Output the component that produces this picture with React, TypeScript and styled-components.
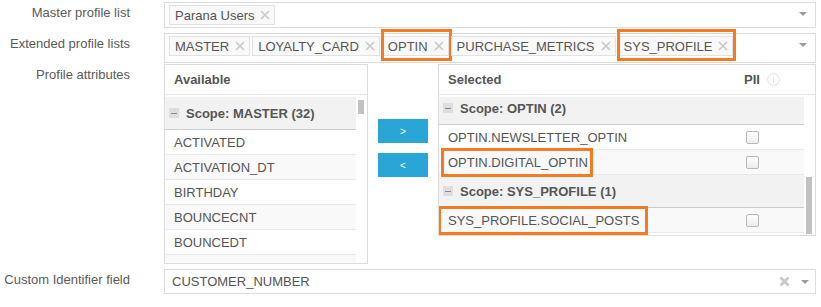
import * as React from 'react';
import styled, { createGlobalStyle, css } from 'styled-components';

const GlobalStyle = createGlobalStyle`
  html, body {
    margin: 0;
    padding: 0;
    background: #fff;
  }
  body {
    font-family: "Liberation Sans", Arial, sans-serif;
    font-size: 13px;
    color: #555;
  }
`;

const ORANGE = '#f47b20';

const Form = styled.div`
  width: 821px;
  box-sizing: border-box;
  padding: 2px 5px 0 0;
`;

const Row = styled.div<{ $gap: number }>`
  display: grid;
  grid-template-columns: 130px 1fr;
  column-gap: 34px;
  margin-bottom: ${(p) => p.$gap}px;
`;

const Label = styled.div`
  text-align: right;
  padding-top: 3px;
  line-height: 16px;
  color: #5a5a5a;
  white-space: nowrap;
`;

const Select = styled.div<{ $height: number }>`
  height: ${(p) => p.$height}px;
  box-sizing: border-box;
  border: 1px solid #dcdcdc;
  background: #fff;
  display: flex;
  align-items: flex-start;
  padding: 2px 8px 0 4px;
`;

const Tags = styled.div`
  display: flex;
  gap: 2px;
  flex: 1;
`;

const marked = css`
  &::after {
    content: '';
    position: absolute;
    top: -8px;
    bottom: -6px;
    left: -2px;
    right: -4px;
    border: 3px solid ${ORANGE};
    pointer-events: none;
  }
`;

const Tag = styled.span<{ $marked?: boolean }>`
  position: relative;
  display: inline-flex;
  align-items: center;
  height: 20px;
  box-sizing: border-box;
  padding: 0 4px 0 5px;
  border: 1px solid #e2e2e2;
  background: #f9f9f9;
  color: #555;
  white-space: nowrap;
  ${(p) => p.$marked && marked}
`;

const TagX = styled.svg`
  margin-left: 6px;
  flex: none;
`;

const Caret = styled.span<{ $top?: number }>`
  margin-left: auto;
  margin-top: ${(p) => p.$top ?? 7}px;
  width: 0;
  height: 0;
  border-left: 4px solid transparent;
  border-right: 4px solid transparent;
  border-top: 4px solid #9a9a9a;
  flex: none;
`;

const SingleSelect = styled(Select)`
  align-items: center;
  padding: 0 6px 0 7px;
`;

const SingleValue = styled.span`
  flex: 1;
  color: #555;
`;

const ClearX = styled.svg`
  margin-right: 11px;
`;

const Picker = styled.div`
  display: flex;
  align-items: flex-start;
`;

const Panel = styled.div<{ $width?: number; $height: number }>`
  box-sizing: border-box;
  ${(p) => (p.$width ? `width: ${p.$width}px;` : 'flex: 1;')}
  height: ${(p) => p.$height}px;
  border: 1px solid #dcdcdc;
  background: #fff;
  display: flex;
  flex-direction: column;
`;

const PanelHeader = styled.div`
  height: 29px;
  flex: none;
  border-bottom: 1px solid #e6e6e6;
  display: grid;
  grid-template-columns: 1fr 114px;
  align-items: center;
  padding-left: 9px;
  font-weight: bold;
  color: #555;
`;

const PiiHead = styled.div`
  display: flex;
  align-items: center;
  gap: 7px;
  padding-left: 43px;
`;

const PanelBody = styled.div`
  flex: 1;
  min-height: 0;
  display: flex;
  padding-top: 2px;
`;

const List = styled.div`
  flex: 1;
  overflow: hidden;
`;

const ListInner = styled.div<{ $scroll: number }>`
  margin-top: -${(p) => p.$scroll}px;
`;

const ScopeRow = styled.div`
  height: 32px;
  border-bottom: 1px solid #cbcbcb;
  background: #f2f2f2;
  display: flex;
  align-items: center;
  padding-left: 4px;
  font-weight: bold;
  color: #555;
`;

const Minus = styled.span`
  width: 10px;
  height: 10px;
  background: #dedede;
  margin-right: 7px;
  display: flex;
  align-items: center;
  justify-content: center;

  &::before {
    content: '';
    width: 6px;
    height: 1px;
    background: #8a8a8a;
  }
`;

const Item = styled.div<{ $shade?: boolean }>`
  height: 24px;
  border-bottom: 1px solid #e8e8e8;
  background: ${(p) => (p.$shade ? '#f9f9f9' : '#fff')};
  display: grid;
  grid-template-columns: 1fr 103px;
  align-items: center;
  padding-left: 9px;
  color: #555;
  white-space: nowrap;
`;

const ItemName = styled.span<{ $marked?: boolean; $left?: number; $right?: number }>`
  position: relative;
  justify-self: start;
  ${(p) =>
    p.$marked &&
    css`
      &::after {
        content: '';
        position: absolute;
        top: -7px;
        bottom: -7px;
        left: -${p.$left ?? 7}px;
        right: -${p.$right ?? 5}px;
        border: 3px solid ${ORANGE};
        pointer-events: none;
      }
    `}
`;

const Check = styled.span`
  justify-self: center;
  width: 13px;
  height: 13px;
  box-sizing: border-box;
  border: 1px solid #b8b8b8;
  border-radius: 2px;
  background: linear-gradient(#ffffff, #ececec);
`;

const ScrollTrack = styled.div<{ $top: number; $size: number }>`
  width: 11px;
  flex: none;
  box-sizing: border-box;
  padding: ${(p) => p.$top}px 3px 0 2px;

  &::before {
    content: '';
    display: block;
    height: ${(p) => p.$size}px;
    background: #c2c2c2;
  }
`;

const MoveButtons = styled.div`
  display: flex;
  flex-direction: column;
  gap: 10px;
  padding-top: 55px;
  margin: 0 10px;
`;

const MoveButton = styled.button`
  width: 50px;
  height: 24px;
  border: 0;
  padding: 0;
  background: #2aa6d6;
  color: #fff;
  font-family: "Liberation Sans", Arial, sans-serif;
  font-size: 10px;
  cursor: pointer;
`;

const SmallX = () => (
  <TagX width="10" height="10" viewBox="0 0 10 10">
    <path d="M1 1L9 9M9 1L1 9" stroke="#c9c9c9" strokeWidth="1.7" />
  </TagX>
);

const InfoIcon = () => (
  <svg width="13" height="13" viewBox="0 0 13 13">
    <circle cx="6.5" cy="6.5" r="5.8" fill="none" stroke="#e0e0e0" strokeWidth="1" />
    <rect x="6" y="3" width="1" height="1" fill="#e0e0e0" />
    <rect x="6" y="5" width="1" height="5" fill="#e0e0e0" />
  </svg>
);

const extended = [
  { name: 'MASTER' },
  { name: 'LOYALTY_CARD' },
  { name: 'OPTIN', marked: true },
  { name: 'PURCHASE_METRICS' },
  { name: 'SYS_PROFILE', marked: true },
];

const available = ['ACTIVATED', 'ACTIVATION_DT', 'BIRTHDAY', 'BOUNCECNT', 'BOUNCEDT', ''];

const App = () => (
  <>
    <GlobalStyle />
    <Form>
      <Row $gap={5}>
        <Label>Master profile list</Label>
        <Select $height={26}>
          <Tags>
            <Tag>
              Parana Users
              <SmallX />
            </Tag>
          </Tags>
          <Caret />
        </Select>
      </Row>

      <Row $gap={1}>
        <Label>Extended profile lists</Label>
        <Select $height={30}>
          <Tags>
            {extended.map((t) => (
              <Tag key={t.name} $marked={t.marked}>
                {t.name}
                <SmallX />
              </Tag>
            ))}
          </Tags>
          <Caret />
        </Select>
      </Row>

      <Row $gap={5}>
        <Label>Profile attributes</Label>
        <Picker>
          <Panel $width={204} $height={200}>
            <PanelHeader>Available</PanelHeader>
            <PanelBody>
              <List>
                <ListInner $scroll={0}>
                  <ScopeRow>
                    <Minus />
                    Scope: MASTER (32)
                  </ScopeRow>
                  {available.map((name, i) => (
                    <Item key={name || `row-${i}`} $shade={i % 2 === 1}>
                      <ItemName>{name}</ItemName>
                    </Item>
                  ))}
                </ListInner>
              </List>
              <ScrollTrack $top={3} $size={14} />
            </PanelBody>
          </Panel>

          <MoveButtons>
            <MoveButton>&gt;</MoveButton>
            <MoveButton>&lt;</MoveButton>
          </MoveButtons>

          <Panel $height={172}>
            <PanelHeader>
              <span>Selected</span>
              <PiiHead>
                PII
                <InfoIcon />
              </PiiHead>
            </PanelHeader>
            <PanelBody>
              <List>
                <ListInner $scroll={5}>
                  <ScopeRow>
                    <Minus />
                    Scope: OPTIN (2)
                  </ScopeRow>
                  <Item>
                    <ItemName>OPTIN.NEWSLETTER_OPTIN</ItemName>
                    <Check />
                  </Item>
                  <Item $shade>
                    <ItemName $marked $left={7} $right={5}>
                      OPTIN.DIGITAL_OPTIN
                    </ItemName>
                    <Check />
                  </Item>
                  <ScopeRow>
                    <Minus />
                    Scope: SYS_PROFILE (1)
                  </ScopeRow>
                  <Item $shade>
                    <ItemName $marked $left={10} $right={9}>
                      SYS_PROFILE.SOCIAL_POSTS
                    </ItemName>
                    <Check />
                  </Item>
                </ListInner>
              </List>
              <ScrollTrack $top={80} $size={57} />
            </PanelBody>
          </Panel>
        </Picker>
      </Row>

      <Row $gap={0}>
        <Label>Custom Identifier field</Label>
        <SingleSelect $height={25}>
          <SingleValue>CUSTOMER_NUMBER</SingleValue>
          <ClearX width="11" height="11" viewBox="0 0 11 11">
            <path d="M1.5 1.5L9.5 9.5M9.5 1.5L1.5 9.5" stroke="#c8c8c8" strokeWidth="2.6" />
          </ClearX>
          <Caret $top={0} />
        </SingleSelect>
      </Row>
    </Form>
  </>
);

export default App;
